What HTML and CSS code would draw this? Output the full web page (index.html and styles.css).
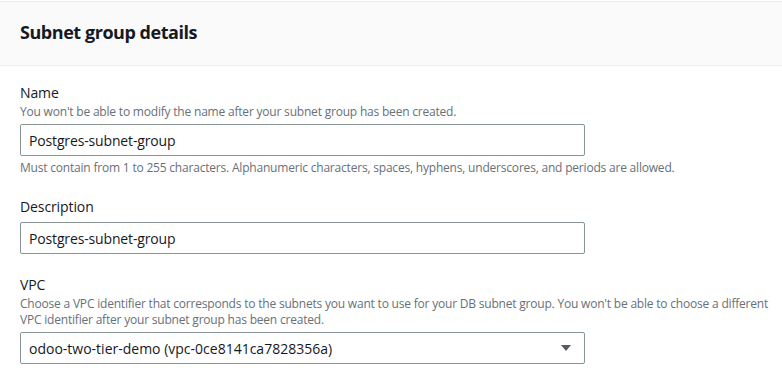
FILE: index.html
```html
<!DOCTYPE html>
<html lang="en">
<head>
    <meta charset="UTF-8">
    <meta name="viewport" content="width=device-width, initial-scale=1.0">
    <title>Subnet group details</title>
    <link rel="stylesheet" href="styles.css">
</head>
<body>
    <div class="panel">
        <div class="panel-header">
            <h2>Subnet group details</h2>
        </div>
        <div class="panel-body">
            <div class="field">
                <label class="field-label" for="name">Name</label>
                <div class="field-desc">You won't be able to modify the name after your subnet group has been created.</div>
                <input id="name" class="text-input" type="text" value="Postgres-subnet-group">
                <div class="field-constraint">Must contain from 1 to 255 characters. Alphanumeric characters, spaces, hyphens, underscores, and periods are allowed.</div>
            </div>

            <div class="field">
                <label class="field-label" for="description">Description</label>
                <input id="description" class="text-input" type="text" value="Postgres-subnet-group">
            </div>

            <div class="field">
                <label class="field-label">VPC</label>
                <div class="field-desc">Choose a VPC identifier that corresponds to the subnets you want to use for your DB subnet group. You won't be able to choose a different VPC identifier after your subnet group has been created.</div>
                <div class="select">
                    <span class="select-value">odoo-two-tier-demo (vpc-0ce8141ca7828356a)</span>
                    <svg class="select-caret" width="10" height="6" viewBox="0 0 10 6">
                        <polygon points="0,0 10,0 5,6" fill="#545b64"/>
                    </svg>
                </div>
            </div>
        </div>
    </div>
</body>
</html>
```

FILE: styles.css
```css
* {
    box-sizing: border-box;
}

body {
    margin: 0;
    background: #fff;
    font-family: 'Open Sans', sans-serif;
    color: #16191f;
}

.panel {
    margin-top: 1px;
    border-top: 1px solid #eaeded;
}

/* Header strip */
.panel-header {
    background: #fafafa;
    border-bottom: 1px solid #eaeded;
    height: 64px;
    padding: 19px 20px 0;
}

.panel-header h2 {
    margin: 0;
    font-size: 18px;
    line-height: 22px;
    font-weight: 700;
    letter-spacing: -0.45px;
}

.panel-body {
    padding: 16px 0 20px 20px;
}

/* Form fields */
.field {
    display: flex;
    flex-direction: column;
    align-items: flex-start;
}

.field + .field {
    margin-top: 20px;
}

.field-label {
    font-size: 14px;
    line-height: 22px;
    letter-spacing: -0.1px;
}

.field-desc,
.field-constraint {
    font-size: 12px;
    line-height: 16px;
    color: #687078;
    letter-spacing: -0.2px;
}

.field-constraint {
    margin-top: 4px;
}

.text-input,
.select {
    margin-top: 4px;
    width: 565px;
    height: 32px;
    border: 1px solid #879596;
    border-radius: 2px;
    padding: 0 8px;
    font-family: inherit;
    font-size: 14px;
    letter-spacing: -0.15px;
    color: #16191f;
    background: #fff;
}

.select {
    display: flex;
    align-items: center;
    justify-content: space-between;
    padding-right: 13px;
    letter-spacing: 0;
}

.select-caret {
    display: block;
}
```
